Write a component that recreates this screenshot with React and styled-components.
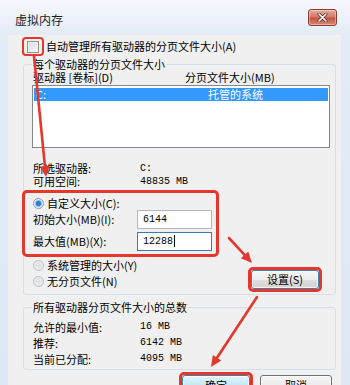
import React from 'react';
import styled, { createGlobalStyle } from 'styled-components';

const GlobalStyle = createGlobalStyle`
  html, body { margin: 0; padding: 0; background: #fff; }
  body {
    font-family: "Noto Sans CJK SC", "Noto Sans", sans-serif;
    font-size: 11px;
    color: #000;
  }
`;

const ANNOT = '#e4372d';

const Window = styled.div`
  position: relative;
  width: 350px;
  height: 385px;
  overflow: hidden;
  display: flex;
  flex-direction: column;
  background: linear-gradient(#f6f9fd 0px, #e2ebf6 36px, #dde8f4 100%);
`;

const TitleBar = styled.div`
  height: 35px;
  flex: none;
  display: flex;
  align-items: flex-start;
  justify-content: space-between;
  padding: 0 13px 0 15px;
  box-sizing: border-box;
`;

const Title = styled.div`
  margin-top: 13px;
  font-size: 12px;
  line-height: 14px;
  color: #1b1b1b;
`;

const CloseButton = styled.div`
  margin-top: 9px;
  width: 29px;
  height: 17px;
  box-sizing: border-box;
  border: 1px solid #8a3f33;
  border-radius: 3px;
  background: linear-gradient(#e8aa9d 0%, #d27a68 45%, #c25643 55%, #d9887a 100%);
  box-shadow: inset 0 0 0 1px rgba(255, 255, 255, 0.35);
  display: flex;
  align-items: center;
  justify-content: center;
`;

const Client = styled.div`
  flex: 1;
  margin: 0 9px 0 8px;
  background: #f0f0f0;
  padding-top: 2px;
  display: flex;
  flex-direction: column;
`;

const CheckRow = styled.div`
  display: flex;
  align-items: center;
  height: 19px;
  margin-left: 14px;
  line-height: 13px;
`;

const CheckHighlight = styled.span`
  width: 22px;
  height: 19px;
  box-sizing: border-box;
  border: 2px solid ${ANNOT};
  border-radius: 4px;
  display: flex;
  align-items: center;
  justify-content: center;
`;

const Checkbox = styled.span`
  width: 12px;
  height: 12px;
  box-sizing: border-box;
  border: 1px solid #8f8f8f;
  background: linear-gradient(135deg, #d8d8d8, #f8f8f8);
  box-shadow: inset 0 0 0 1px #f4f4f4;
`;

const CheckLabel = styled.span`
  margin-left: 2px;
`;

const GroupBox = styled.fieldset`
  margin: ${p => p.$top}px 0 0 15px;
  width: 313px;
  min-width: 0;
  box-sizing: border-box;
  border: 1px solid #d5dfe5;
  border-radius: 3px;
  padding: 0 9px ${p => p.$bottom}px 9px;
`;

const Legend = styled.legend`
  padding: 0 1px;
  margin-left: -1px;
  line-height: 13px;
  font-size: 11px;
`;

const ListHeader = styled.div`
  display: grid;
  grid-template-columns: 152px auto;
  line-height: 13px;
`;

const ListBox = styled.div`
  margin: 1px 0 0 -1px;
  width: 298px;
  height: 63px;
  box-sizing: border-box;
  border: 1px solid #828790;
  background: #fff;
  padding: 2px 1px;
`;

const ListRow = styled.div`
  display: grid;
  grid-template-columns: 172px auto;
  padding-left: 2px;
  line-height: 13px;
  background: #3399ff;
  color: #fff;
`;

const InfoGrid = styled.div`
  display: grid;
  grid-template-columns: 107px auto;
  line-height: ${p => p.$line}px;
  margin-top: ${p => p.$top}px;
`;

const Mono = styled.span`
  font-family: "Liberation Mono", monospace;
  font-size: 10px;
`;

const RedBox = styled.div`
  margin: 2px 0 0 -11px;
  width: 197px;
  box-sizing: border-box;
  border: 3px solid ${ANNOT};
  border-radius: 5px;
  padding: 4px 0 3px 8px;
`;

const RadioRow = styled.div`
  display: flex;
  align-items: center;
  gap: 3px;
  line-height: 13px;
`;

const Radio = styled.span`
  width: 11px;
  height: 11px;
  box-sizing: border-box;
  border-radius: 50%;
  border: 1px solid ${p => (p.$checked ? '#8b9bb0' : '#b9bec4')};
  background: ${p =>
    p.$checked
      ? 'radial-gradient(circle, #2f7fd0 0 2.4px, #8fc0ee 3px, #e9eef4 4px)'
      : 'radial-gradient(circle, #e2e4e6 0 2px, #eef0f2 5px)'};
`;

const InputRow = styled.div`
  display: grid;
  grid-template-columns: 104px 75px;
  align-items: center;
  height: 20px;
  margin-top: ${p => p.$top}px;
`;

const TextField = styled.div`
  height: 19px;
  box-sizing: border-box;
  border: 1px solid ${p => (p.$focused ? '#3d7bad' : '#b4b7bd')};
  background: #fff;
  padding-left: 5px;
  display: flex;
  align-items: center;
`;

const Caret = styled.span`
  width: 1px;
  height: 12px;
  margin-left: 1px;
  background: #000;
`;

const BottomRow = styled.div`
  display: flex;
  justify-content: space-between;
  align-items: flex-start;
  margin-top: 2px;
`;

const RadioList = styled.div`
  display: flex;
  flex-direction: column;
  gap: 3px;
`;

const ButtonHighlight = styled.div`
  margin: ${p => p.$margin};
  border: 3px solid ${ANNOT};
  border-radius: 5px;
  display: flex;
`;

const PushButton = styled.div`
  width: ${p => p.$width}px;
  height: ${p => p.$height}px;
  box-sizing: border-box;
  margin-top: ${p => p.$top || 0}px;
  border: 1px solid ${p => (p.$tone === 'plain' ? '#707070' : '#3c7fb1')};
  border-radius: 3px;
  background: ${p =>
    p.$tone === 'default'
      ? 'linear-gradient(#e3f4fc 0%, #c4e8f6 50%, #9fd8ee 51%, #86cde8 100%)'
      : 'linear-gradient(#f6f6f6 0%, #ececec 50%, #dedede 51%, #d2d2d2 100%)'};
  box-shadow: inset 0 0 0 1px rgba(255, 255, 255, 0.7);
  display: flex;
  align-items: center;
  justify-content: center;
  line-height: 13px;
`;

const ButtonRow = styled.div`
  display: flex;
  justify-content: flex-end;
  align-items: flex-start;
  gap: 7px;
  padding-right: 9px;
  margin-top: 2px;
`;

const Overlay = styled.svg`
  position: absolute;
  left: 0;
  top: 0;
  pointer-events: none;
`;

function Arrow({ x1, y1, x2, y2 }) {
  const a = Math.atan2(y2 - y1, x2 - x1);
  const len = 11;
  const w = 5;
  const bx = x2 - len * Math.cos(a);
  const by = y2 - len * Math.sin(a);
  const px = -Math.sin(a) * w;
  const py = Math.cos(a) * w;
  return (
    <g>
      <line x1={x1} y1={y1} x2={bx} y2={by} stroke={ANNOT} strokeWidth="2.6" strokeLinecap="round" />
      <polygon points={`${x2},${y2} ${bx + px},${by + py} ${bx - px},${by - py}`} fill={ANNOT} />
    </g>
  );
}

export default function App() {
  return (
    <>
      <GlobalStyle />
      <Window>
        <TitleBar>
          <Title>虚拟内存</Title>
          <CloseButton>
            <svg width="11" height="9" viewBox="0 0 11 9">
              <path d="M2 1 L9 8 M9 1 L2 8" stroke="#5a2a22" strokeWidth="3" strokeLinecap="round" />
              <path d="M2 1 L9 8 M9 1 L2 8" stroke="#fff" strokeWidth="1.6" strokeLinecap="round" />
            </svg>
          </CloseButton>
        </TitleBar>

        <Client>
          <CheckRow>
            <CheckHighlight><Checkbox /></CheckHighlight>
            <CheckLabel>自动管理所有驱动器的分页文件大小(A)</CheckLabel>
          </CheckRow>

          <GroupBox $top={2} $bottom={2}>
            <Legend>每个驱动器的分页文件大小</Legend>
            <ListHeader>
              <span>驱动器 [卷标](D)</span>
              <span>分页文件大小(MB)</span>
            </ListHeader>
            <ListBox>
              <ListRow>
                <span>C:</span>
                <span>托管的系统</span>
              </ListRow>
            </ListBox>

            <InfoGrid $line={13} $top={14}>
              <span>所选驱动器:</span>
              <Mono>C:</Mono>
              <span>可用空间:</span>
              <Mono>48835 MB</Mono>
            </InfoGrid>

            <RedBox>
              <RadioRow>
                <Radio $checked />
                <span>自定义大小(C):</span>
              </RadioRow>
              <InputRow $top={-1}>
                <span>初始大小(MB)(I):</span>
                <TextField><Mono>6144</Mono></TextField>
              </InputRow>
              <InputRow $top={2}>
                <span>最大值(MB)(X):</span>
                <TextField $focused><Mono>12288</Mono><Caret /></TextField>
              </InputRow>
            </RedBox>

            <BottomRow>
              <RadioList>
                <RadioRow>
                  <Radio />
                  <span>系统管理的大小(Y)</span>
                </RadioRow>
                <RadioRow>
                  <Radio />
                  <span>无分页文件(N)</span>
                </RadioRow>
              </RadioList>
              <ButtonHighlight $margin="8px 4px 0 0">
                <PushButton $width={68} $height={19} $tone="hover">设置(S)</PushButton>
              </ButtonHighlight>
            </BottomRow>
          </GroupBox>

          <GroupBox $top={6} $bottom={2}>
            <Legend>所有驱动器分页文件大小的总数</Legend>
            <InfoGrid $line={16} $top={5}>
              <span>允许的最小值:</span>
              <Mono>16 MB</Mono>
              <span>推荐:</span>
              <Mono>6142 MB</Mono>
              <span>当前已分配:</span>
              <Mono>4095 MB</Mono>
            </InfoGrid>
          </GroupBox>

          <ButtonRow>
            <ButtonHighlight $margin="0">
              <PushButton $width={68} $height={21} $tone="default">确定</PushButton>
            </ButtonHighlight>
            <PushButton $width={72} $height={21} $top={3} $tone="plain">取消</PushButton>
          </ButtonRow>
        </Client>

        <Overlay width="350" height="385" viewBox="0 0 350 385">
          <Arrow x1={34} y1={56} x2={46} y2={177} />
          <Arrow x1={229} y1={238} x2={252} y2={263} />
          <Arrow x1={257} y1={297} x2={211} y2={367} />
        </Overlay>
      </Window>
    </>
  );
}
